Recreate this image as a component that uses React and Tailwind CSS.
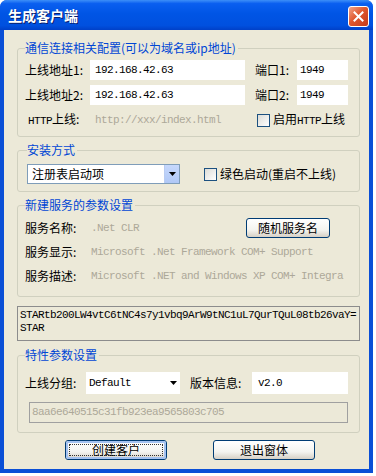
import React from 'react';

const cjk = { fontFamily: '"Noto Sans CJK SC", "Noto Sans", sans-serif' };
const mono = { fontFamily: '"Liberation Mono", "DejaVu Sans Mono", monospace' };

function Group({ title, className, children }) {
  return (
    <fieldset className={'w-[343px] ml-[13px] border border-[#D0D0BF] rounded-[3px] ' + className}>
      <legend className="text-[12px] leading-[14px] text-[#0046D5] pr-[2px]">{title}</legend>
      {children}
    </fieldset>
  );
}

function Checkbox() {
  return <span className="inline-block w-[13px] h-[13px] border border-[#1C5180] bg-[linear-gradient(135deg,#DCDCD7,#FFFFFF)] mr-[3px] shrink-0" />;
}

function Arrow() {
  return (
    <svg width="7" height="4" viewBox="0 0 7 4"><path d="M0 0h7L3.5 4z" fill="#000" /></svg>
  );
}

function XpButton({ label, focused, className }) {
  return (
    <div className={'h-[20px] rounded-[3px] border border-[#003C74] bg-[linear-gradient(to_bottom,#FFFFFF,#F4F4F0_60%,#D6D0C5)] flex items-center justify-center text-[12px] text-black ' + className}>
      {focused ? (
        <div className="w-full h-full rounded-[2px] border-2 border-[#A4C2F0] flex items-center justify-center">
          <div className="w-[calc(100%-2px)] h-[calc(100%-2px)] border border-dotted border-[#333] flex items-center justify-center">{label}</div>
        </div>
      ) : label}
    </div>
  );
}

export default function App() {
  return (
    <div className="w-[376px] h-[476px] bg-white text-[12px] text-black" style={cjk}>
      <div className="w-[373px] h-[473px] rounded-t-[7px] bg-[#0A4FD6] flex flex-col overflow-hidden">
        {/* title bar */}
        <div className="h-[30px] shrink-0 flex items-center px-[8px] bg-[linear-gradient(to_bottom,#3D8FF8,#0A5FF0_12%,#0055E5_45%,#0050DF_85%,#0040C8)]">
          <span className="text-white font-bold text-[14px] [text-shadow:1px_1px_#0A1E6E]">生成客户端</span>
          <div className="ml-auto w-[21px] h-[21px] rounded-[3px] border border-white bg-[linear-gradient(135deg,#F2A48A,#E0582F_45%,#C23A1A)] flex items-center justify-center mt-[3px] -mr-[4px]">
            <svg width="11" height="11" viewBox="0 0 11 11"><path d="M1.5 1.5l8 8M9.5 1.5l-8 8" stroke="#fff" strokeWidth="2" strokeLinecap="square" /></svg>
          </div>
        </div>

        {/* body */}
        <div className="flex-1 mx-[4px] mb-[4px] bg-[#ECE9D8] pt-[11px] flex flex-col">
          <Group title="通信连接相关配置(可以为域名或ip地址)" className="pl-[7px] pt-[5px] pb-[6px]">
            <div className="flex flex-col gap-[5px]">
              <div className="flex items-center h-[20px]">
                <span className="w-[65px]">上线地址1:</span>
                <div className="w-[155px] h-[20px] bg-white pl-[5px] flex items-center text-[11px] tracking-[-0.6px]" style={mono}>192.168.42.63</div>
                <span className="ml-[10px] w-[42px]">端口1:</span>
                <div className="w-[51px] h-[20px] bg-white pl-[3px] flex items-center text-[11px] tracking-[-0.6px]" style={mono}>1949</div>
              </div>
              <div className="flex items-center h-[20px]">
                <span className="w-[65px]">上线地址2:</span>
                <div className="w-[155px] h-[20px] bg-white pl-[5px] flex items-center text-[11px] tracking-[-0.6px]" style={mono}>192.168.42.63</div>
                <span className="ml-[10px] w-[42px]">端口2:</span>
                <div className="w-[51px] h-[20px] bg-white pl-[3px] flex items-center text-[11px] tracking-[-0.6px]" style={mono}>1949</div>
              </div>
              <div className="flex items-center h-[20px]">
                <span className="w-[70px] pl-[3px]"><span className="text-[11px] tracking-[-0.6px]" style={mono}>HTTP</span>上线:</span>
                <span className="w-[162px] text-[11px] tracking-[-0.6px] text-[#ACA899]" style={mono}>http://xxx/index.html</span>
                <Checkbox />
                <span>启用<span className="text-[11px] tracking-[-0.6px]" style={mono}>HTTP</span>上线</span>
              </div>
            </div>
          </Group>

          <Group title="安装方式" className="mt-[6px] pl-[9px] pt-[7px] pb-[7px]">
            <div className="flex items-center h-[20px]">
              <div className="w-[153px] h-[20px] border border-[#7F9DB9] bg-white flex items-center">
                <span className="flex-1 pl-[4px]">注册表启动项</span>
                <div className="w-[15px] h-[18px] bg-[linear-gradient(to_bottom,#C6D8FC,#B0C8F6)] border-l border-[#B9CCF2] flex items-center justify-center"><Arrow /></div>
              </div>
              <div className="ml-[24px] flex items-center">
                <Checkbox />
                <span>绿色启动(重启不上线)</span>
              </div>
            </div>
          </Group>

          <Group title="新建服务的参数设置" className="mt-[6px] pl-[7px] pt-[6px] pb-[10px]">
            <div className="flex flex-col gap-[4px]">
              <div className="flex items-center h-[20px]">
                <span className="w-[66px]">服务名称:</span>
                <span className="w-[155px] text-[11px] tracking-[-0.6px] text-[#ACA899]" style={mono}>.Net CLR</span>
                <XpButton label="随机服务名" className="w-[84px]" />
              </div>
              <div className="flex items-center h-[20px]">
                <span className="w-[66px]">服务显示:</span>
                <span className="text-[11px] tracking-[-0.6px] text-[#ACA899]" style={mono}>Microsoft .Net Framework COM+ Support</span>
              </div>
              <div className="flex items-center h-[20px]">
                <span className="w-[66px]">服务描述:</span>
                <span className="text-[11px] tracking-[-0.6px] text-[#ACA899] whitespace-nowrap overflow-hidden w-[265px]" style={mono}>Microsoft .NET and Windows XP COM+ Integra</span>
              </div>
            </div>
          </Group>

          <div className="mt-[9px] ml-[13px] w-[343px] h-[35px] border border-[#8C8C8C] pl-[2px] pt-[2px] text-[11px] leading-[13px] tracking-[-0.6px] break-all" style={mono}>
            STARtb200LW4vtC6tNC4s7y1vbq9ArW9tNC1uL7QurTQuL08tb26vaY=<br />STAR
          </div>

          <Group title="特性参数设置" className="mt-[7px] pl-[7px] pt-[10px] pb-[9px]">
            <div className="flex items-center h-[22px]">
              <span className="w-[61px]">上线分组:</span>
              <div className="w-[94px] h-[22px] bg-white flex items-center">
                <span className="flex-1 pl-[3px] text-[11px] tracking-[-0.6px]" style={mono}>Default</span>
                <div className="w-[14px] flex items-center justify-center"><Arrow /></div>
              </div>
              <span className="ml-[10px] w-[62px]">版本信息:</span>
              <div className="w-[96px] h-[22px] bg-white pl-[6px] flex items-center text-[11px] tracking-[-0.6px]" style={mono}>v2.0</div>
            </div>
            <div className="mt-[8px] ml-[4px] w-[319px] h-[21px] border border-[#A0A0A0] pl-[2px] flex items-center text-[11px] tracking-[-0.6px] text-[#ACA899]" style={mono}>8aa6e640515c31fb923ea9565803c705</div>
          </Group>

          <div className="mt-[7px] flex">
            <XpButton label="创建客户" focused className="ml-[61px] w-[102px]" />
            <XpButton label="退出窗体" className="ml-[46px] w-[102px]" />
          </div>
        </div>
      </div>
    </div>
  );
}
